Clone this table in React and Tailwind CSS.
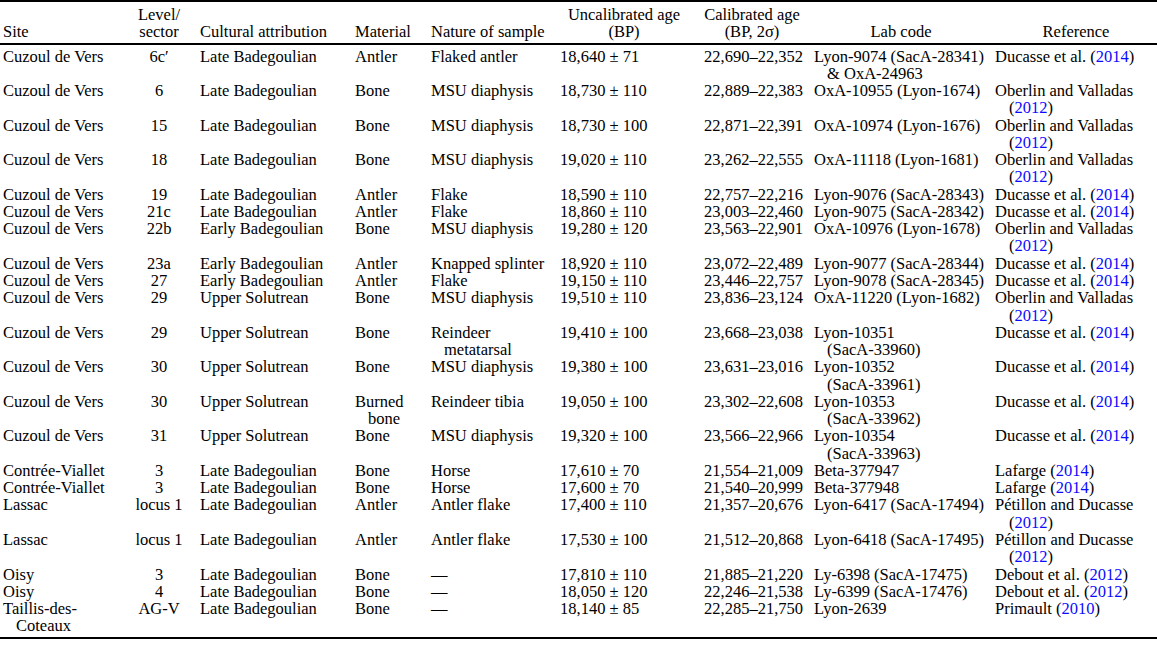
import React from "react";

const cols =
  "grid grid-cols-[130px_58px_167px_76px_129px_144px_110px_181px_162px]";

const rows = [
  ["Cuzoul de Vers", "6c′", "Late Badegoulian", "Antler", "Flaked antler", "18,640 ± 71", "22,690–22,352", ["Lyon-9074 (SacA-28341)", "& OxA-24963"], ["Ducasse et al.", "2014"]],
  ["Cuzoul de Vers", "6", "Late Badegoulian", "Bone", "MSU diaphysis", "18,730 ± 110", "22,889–22,383", ["OxA-10955 (Lyon-1674)"], ["Oberlin and Valladas", "2012", true]],
  ["Cuzoul de Vers", "15", "Late Badegoulian", "Bone", "MSU diaphysis", "18,730 ± 100", "22,871–22,391", ["OxA-10974 (Lyon-1676)"], ["Oberlin and Valladas", "2012", true]],
  ["Cuzoul de Vers", "18", "Late Badegoulian", "Bone", "MSU diaphysis", "19,020 ± 110", "23,262–22,555", ["OxA-11118 (Lyon-1681)"], ["Oberlin and Valladas", "2012", true]],
  ["Cuzoul de Vers", "19", "Late Badegoulian", "Antler", "Flake", "18,590 ± 110", "22,757–22,216", ["Lyon-9076 (SacA-28343)"], ["Ducasse et al.", "2014"]],
  ["Cuzoul de Vers", "21c", "Late Badegoulian", "Antler", "Flake", "18,860 ± 110", "23,003–22,460", ["Lyon-9075 (SacA-28342)"], ["Ducasse et al.", "2014"]],
  ["Cuzoul de Vers", "22b", "Early Badegoulian", "Bone", "MSU diaphysis", "19,280 ± 120", "23,563–22,901", ["OxA-10976 (Lyon-1678)"], ["Oberlin and Valladas", "2012", true]],
  ["Cuzoul de Vers", "23a", "Early Badegoulian", "Antler", "Knapped splinter", "18,920 ± 110", "23,072–22,489", ["Lyon-9077 (SacA-28344)"], ["Ducasse et al.", "2014"]],
  ["Cuzoul de Vers", "27", "Early Badegoulian", "Antler", "Flake", "19,150 ± 110", "23,446–22,757", ["Lyon-9078 (SacA-28345)"], ["Ducasse et al.", "2014"]],
  ["Cuzoul de Vers", "29", "Upper Solutrean", "Bone", "MSU diaphysis", "19,510 ± 110", "23,836–23,124", ["OxA-11220 (Lyon-1682)"], ["Oberlin and Valladas", "2012", true]],
  ["Cuzoul de Vers", "29", "Upper Solutrean", "Bone", ["Reindeer", "metatarsal"], "19,410 ± 100", "23,668–23,038", ["Lyon-10351", "(SacA-33960)"], ["Ducasse et al.", "2014"]],
  ["Cuzoul de Vers", "30", "Upper Solutrean", "Bone", "MSU diaphysis", "19,380 ± 100", "23,631–23,016", ["Lyon-10352", "(SacA-33961)"], ["Ducasse et al.", "2014"]],
  ["Cuzoul de Vers", "30", "Upper Solutrean", ["Burned", "bone"], "Reindeer tibia", "19,050 ± 100", "23,302–22,608", ["Lyon-10353", "(SacA-33962)"], ["Ducasse et al.", "2014"]],
  ["Cuzoul de Vers", "31", "Upper Solutrean", "Bone", "MSU diaphysis", "19,320 ± 100", "23,566–22,966", ["Lyon-10354", "(SacA-33963)"], ["Ducasse et al.", "2014"]],
  ["Contrée-Viallet", "3", "Late Badegoulian", "Bone", "Horse", "17,610 ± 70", "21,554–21,009", ["Beta-377947"], ["Lafarge", "2014"]],
  ["Contrée-Viallet", "3", "Late Badegoulian", "Bone", "Horse", "17,600 ± 70", "21,540–20,999", ["Beta-377948"], ["Lafarge", "2014"]],
  ["Lassac", "locus 1", "Late Badegoulian", "Antler", "Antler flake", "17,400 ± 110", "21,357–20,676", ["Lyon-6417 (SacA-17494)"], ["Pétillon and Ducasse", "2012", true]],
  ["Lassac", "locus 1", "Late Badegoulian", "Antler", "Antler flake", "17,530 ± 100", "21,512–20,868", ["Lyon-6418 (SacA-17495)"], ["Pétillon and Ducasse", "2012", true]],
  ["Oisy", "3", "Late Badegoulian", "Bone", "—", "17,810 ± 110", "21,885–21,220", ["Ly-6398 (SacA-17475)"], ["Debout et al.", "2012"]],
  ["Oisy", "4", "Late Badegoulian", "Bone", "—", "18,050 ± 120", "22,246–21,538", ["Ly-6399 (SacA-17476)"], ["Debout et al.", "2012"]],
  [["Taillis-des-", "Coteaux"], "AG-V", "Late Badegoulian", "Bone", "—", "18,140 ± 85", "22,285–21,750", ["Lyon-2639"], ["Primault", "2010"]],
];

// wrapped lines get a hanging indent
const Lines = ({ value }) => {
  const lines = Array.isArray(value) ? value : [value];
  return lines.map((l, i) => (
    <div key={i} className={i > 0 ? "pl-[13px]" : ""}>
      {l}
    </div>
  ));
};

const Year = ({ y }) => (
  <>
    (<span className="text-[#0a0aff]">{y}</span>)
  </>
);

const Ref = ({ data }) => {
  const [author, year, wrap] = data;
  if (wrap) {
    return (
      <div>
        <div>{author}</div>
        <div className="pl-[14px]">
          <Year y={year} />
        </div>
      </div>
    );
  }
  return (
    <div>
      {author} <Year y={year} />
    </div>
  );
};

export default function App() {
  return (
    <div className="w-[1157px] h-[645px] bg-white text-black font-['Liberation_Serif',serif] text-[16.5px] leading-[17.27px]">
      <div className="border-t-2 border-b-2 border-black">
        {/* header */}
        <div className={`${cols} items-end pt-[4px] pb-[2px] border-b-2 border-black`}>
          <div className="pl-[3px]">Site</div>
          <div className="text-center">
            <div>Level/</div>
            <div>sector</div>
          </div>
          <div className="pl-[12px]">Cultural attribution</div>
          <div>Material</div>
          <div>Nature of sample</div>
          <div className="text-center pr-[16px]">
            <div>Uncalibrated age</div>
            <div>(BP)</div>
          </div>
          <div className="text-center pr-[14px]">
            <div>Calibrated age</div>
            <div>(BP, 2σ)</div>
          </div>
          <div className="text-center pr-[7px]">Lab code</div>
          <div className="text-center">Reference</div>
        </div>

        {/* body */}
        <div className={`${cols} pt-[3px] pb-[2px]`}>
          {rows.map((r, i) => (
            <React.Fragment key={i}>
              <div className="pl-[3px]">
                <Lines value={r[0]} />
              </div>
              <div className="text-center">{r[1]}</div>
              <div className="pl-[12px]">{r[2]}</div>
              <div>
                <Lines value={r[3]} />
              </div>
              <div>
                <Lines value={r[4]} />
              </div>
              <div>{r[5]}</div>
              <div>{r[6]}</div>
              <div>
                <Lines value={r[7]} />
              </div>
              <Ref data={r[8]} />
            </React.Fragment>
          ))}
        </div>
      </div>
    </div>
  );
}
